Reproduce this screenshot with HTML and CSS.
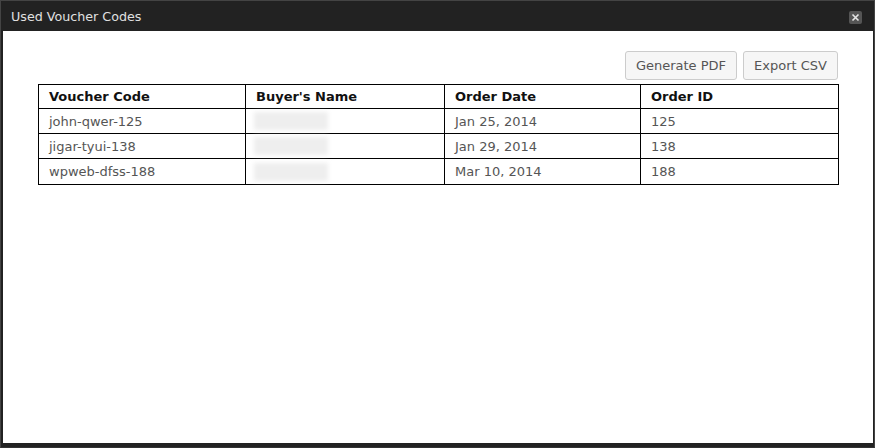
FILE: index.html
```html
<!DOCTYPE html>
<html>
<head>
<meta charset="utf-8">
<link rel="stylesheet" href="styles.css">
</head>
<body>
<div class="dialog">
  <div class="titlebar">
    <span class="title">Used Voucher Codes</span>
    <span class="close"><svg width="9" height="9" viewBox="0 0 9 9"><path d="M1.5 1.5L7.5 7.5M7.5 1.5L1.5 7.5" stroke="#e6e6e6" stroke-width="1.6"/></svg></span>
  </div>
  <div class="content">
    <div class="actions">
      <button class="btn">Generate PDF</button>
      <button class="btn">Export CSV</button>
    </div>
    <table class="codes">
      <colgroup>
        <col class="c1"><col class="c2"><col class="c3"><col class="c4">
      </colgroup>
      <thead>
        <tr><th>Voucher Code</th><th>Buyer's Name</th><th>Order Date</th><th>Order ID</th></tr>
      </thead>
      <tbody>
        <tr><td>john-qwer-125</td><td><span class="blur"></span></td><td>Jan 25, 2014</td><td>125</td></tr>
        <tr><td>jigar-tyui-138</td><td><span class="blur"></span></td><td>Jan 29, 2014</td><td>138</td></tr>
        <tr class="last"><td>wpweb-dfss-188</td><td><span class="blur"></span></td><td>Mar 10, 2014</td><td>188</td></tr>
      </tbody>
    </table>
  </div>
</div>
</body>
</html>
```
FILE: styles.css
```css
html, body {
  margin: 0;
  padding: 0;
  background: #1c1c1c;
}
.dialog {
  width: 875px;
  height: 448px;
  box-sizing: border-box;
  border: 1px solid #444;
  border-bottom-color: #333;
  background: #222;
  padding: 0 1px 4px 2px;
  display: flex;
  flex-direction: column;
  font-family: "DejaVu Sans", Verdana, sans-serif;
}
.titlebar {
  height: 30px;
  display: flex;
  align-items: center;
  justify-content: space-between;
  padding: 0 10px 0 8px;
}
.title {
  color: #e0e0e0;
  font-size: 12.7px;
  margin-top: 1px;
}
.close {
  width: 13px;
  height: 13px;
  background: #555;
  border-radius: 2px;
  display: flex;
  align-items: center;
  justify-content: center;
  margin-top: 3px;
  margin-right: 1px;
}
.content {
  flex: 1;
  background: #fff;
  padding: 20px 35px 0 35px;
}
.actions {
  display: flex;
  justify-content: flex-end;
  gap: 6px;
  margin-bottom: 4px;
}
.btn {
  height: 29px;
  padding: 0 10px;
  border: 1px solid #ccc;
  border-radius: 3px;
  background: #f6f6f6;
  color: #555;
  font-family: "DejaVu Sans", Verdana, sans-serif;
  font-size: 13px;
}
.codes {
  width: 800px;
  border-collapse: collapse;
  table-layout: fixed;
  border: 1px solid #000;
}
.c1 { width: 207px; }
.c2 { width: 199px; }
.c3 { width: 196px; }
.c4 { width: 198px; }
.codes th, .codes td {
  border: 1px solid #000;
  height: 24px;
  padding: 0 10px;
  text-align: left;
  font-size: 13px;
}
.codes th {
  height: 23px;
  font-weight: bold;
  color: #111;
}
.codes td {
  color: #555;
}
.codes .last td {
  height: 25px;
}
.blur {
  display: block;
  width: 74px;
  height: 18px;
  margin-left: -2px;
  background: #eee;
  filter: blur(2px);
}
```
